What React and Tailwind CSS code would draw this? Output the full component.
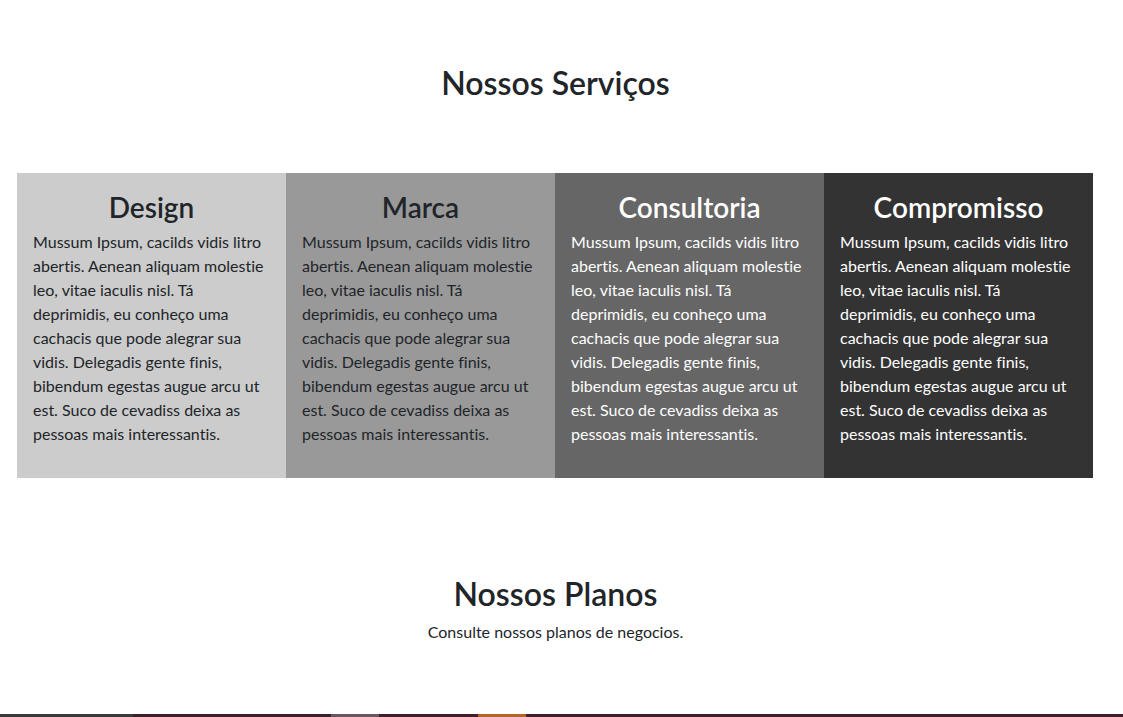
import React from "react";

const text =
  "Mussum Ipsum, cacilds vidis litro abertis. Aenean aliquam molestie leo, vitae iaculis nisl. Tá deprimidis, eu conheço uma cachacis que pode alegrar sua vidis. Delegadis gente finis, bibendum egestas augue arcu ut est. Suco de cevadiss deixa as pessoas mais interessantis.";

const cards = [
  { title: "Design", cls: "bg-[#cccccc] text-[#212529]" },
  { title: "Marca", cls: "bg-[#999999] text-[#212529]" },
  { title: "Consultoria", cls: "bg-[#666666] text-white" },
  { title: "Compromisso", cls: "bg-[#333333] text-white" },
];

export default function App() {
  return (
    <div
      className="w-full bg-white text-[#212529] overflow-hidden h-[717px] flex flex-col [font-variant-ligatures:none]"
      style={{ fontFamily: '"Lato", "Noto Sans", sans-serif' }}
    >
      <div className="w-[1111px] flex flex-col">
        <h2 className="pt-[64px] text-center text-[32px] leading-[1.2] font-semibold">
          Nossos Serviços
        </h2>
        <div className="mt-[71px] ml-[17px] w-[1076px] grid grid-cols-4">
          {cards.map((c) => (
            <div key={c.title} className={`${c.cls} px-4 pt-4 pb-4`}>
              <h3 className="text-center text-[28px] leading-[1.2] font-semibold mb-[5px] pt-[2px]">
                {c.title}
              </h3>
              <p className="text-[16px] leading-[24px] mb-4">{text}</p>
            </div>
          ))}
        </div>
        <h2 className="mt-[97px] text-center text-[32px] leading-[1.2] font-semibold">
          Nossos Planos
        </h2>
        <p className="mt-[7px] text-center text-[16px] leading-[24px]">
          Consulte nossos planos de negocios.
        </p>
      </div>
      <div className="mt-auto flex h-[3px] w-full">
        <div className="w-[133px] bg-[#3a3a3a]" />
        <div className="w-[198px] bg-[#3e1f2b]" />
        <div className="w-[48px] bg-[#6a5560]" />
        <div className="w-[99px] bg-[#3e1f2b]" />
        <div className="w-[48px] bg-[#b5652c]" />
        <div className="flex-1 bg-[#3e1f2b]" />
      </div>
    </div>
  );
}
